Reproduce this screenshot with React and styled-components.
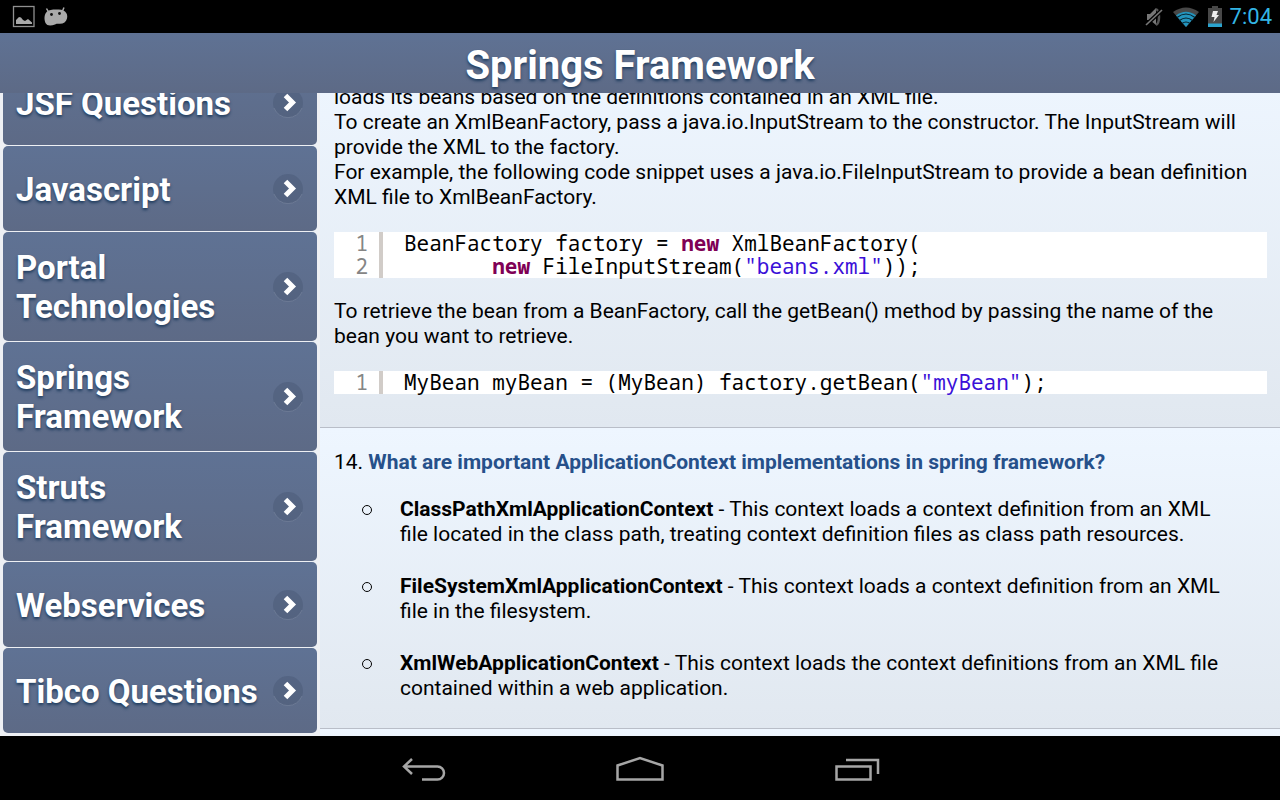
import React from 'react';
import styled, { createGlobalStyle } from 'styled-components';

const GlobalStyle = createGlobalStyle`
  * {
    box-sizing: border-box;
  }
  body {
    margin: 0;
    background: #000;
    font-family: Roboto, 'Liberation Sans', sans-serif;
  }
`;

const Screen = styled.div`
  display: flex;
  flex-direction: column;
  height: 100vh;
  overflow: hidden;
`;

const StatusBar = styled.div`
  display: flex;
  flex: none;
  align-items: center;
  justify-content: space-between;
  height: 33px;
  padding: 0 8px 0 12px;
  background: #000;
`;

const StatusGroup = styled.div`
  display: flex;
  align-items: center;
  gap: 8px;
`;

const Clock = styled.span`
  color: #33b5e5;
  font-size: 22px;
  line-height: 35px;
`;

const Header = styled.header`
  flex: none;
  height: 60px;
  background: linear-gradient(#5f7294, #5d6a86);
`;

const Title = styled.h1`
  margin: 0;
  color: #fff;
  font-size: 40px;
  font-weight: bold;
  line-height: 66px;
  text-align: center;
  text-shadow: 0 2px 3px #1f3c5e;
`;

const Main = styled.div`
  display: flex;
  flex: 1;
  min-height: 0;
  background: #eef0f4;
`;

const Sidebar = styled.nav`
  display: flex;
  flex: none;
  flex-direction: column;
  justify-content: flex-end;
  gap: 1px;
  width: 320px;
  padding: 0 3px 3px;
  overflow: hidden;
`;

const TopicLink = styled.a`
  display: flex;
  flex: none;
  align-items: center;
  justify-content: space-between;
  min-height: 85px;
  padding: 16px 13px 15px;
  border-radius: 5px;
  background: linear-gradient(#5f7294, #5d6a86);
  color: #fff;
  font-size: 33px;
  font-weight: bold;
  line-height: 39px;
  text-decoration: none;
  text-shadow: 0 2px 3px #1f3c5e;

  svg {
    flex: none;
  }
`;

const Content = styled.main`
  flex: 1;
  min-width: 0;
  overflow: hidden;
`;

const Article = styled.article`
  padding: 22px 13px 27px 14px;
  border-bottom: 1px solid #b9bec8;
  background: linear-gradient(#eef6ff, #e1e8f0);
  color: #000;
  font-size: 21px;
  line-height: 25px;

  &:first-child {
    margin-top: -30px;
    padding-bottom: 12px;
  }
`;

const Paragraph = styled.p`
  margin: 0;
  padding-right: 8px;
`;

const Question = styled.h2`
  margin: 0;
  font-size: 21px;
  font-weight: normal;
  line-height: 25px;

  strong {
    color: #26508a;
  }
`;

const Code = styled.table`
  width: 100%;
  margin: 22px 0 21px;
  border-spacing: 0;
  background: #fff;
  font-family: 'Droid Sans Mono', 'Noto Sans Mono', 'DejaVu Sans Mono', monospace;
  font-size: 21px;
  line-height: 23px;

  td {
    padding: 0;
    white-space: pre;
  }
`;

const LineNumber = styled.td`
  width: 49px;
  border-right: 4px solid #d1ccc8;
  color: #858585;

  span {
    display: block;
    width: 34px;
    text-align: right;
  }
`;

const CodeText = styled.code`
  padding-left: 21px;
  font-family: inherit;
`;

const Keyword = styled.b`
  color: #7f0055;
`;

const Str = styled.span`
  color: #3a10d8;
`;

const Contexts = styled.ul`
  display: flex;
  flex-direction: column;
  gap: 27px;
  margin: 22px 0 0;
  padding: 0 28px;
  list-style: none;
`;

const Context = styled.li`
  display: flex;
  gap: 28px;
`;

const Bullet = styled.span`
  flex: none;
  width: 10px;
  height: 10px;
  margin-top: 8px;
  border: 1px solid #000;
  border-radius: 50%;
`;

const NavBar = styled.div`
  display: flex;
  flex: none;
  align-items: center;
  justify-content: center;
  gap: 120px;
  height: 64px;
  padding-top: 4px;
  background: #000;
`;

const NavButton = styled.button`
  display: flex;
  align-items: center;
  justify-content: center;
  width: 96px;
  height: 60px;
  padding: 0;
  border: 0;
  background: none;
`;

const ArrowIcon = () => (
  <svg width="32" height="34" viewBox="0 0 32 34" aria-hidden="true">
    <circle cx="16" cy="17" r="15" fill="#2d3a55" fillOpacity="0.2" />
    <path d="M2 22a15 15 0 0 0 28 0" fill="none" stroke="#8794ae" strokeOpacity="0.45" />
    <path d="M13.500 9.500l7 7-7 7" fill="none" stroke="#fff" strokeWidth="5" />
  </svg>
);

const PictureIcon = () => (
  <svg width="23" height="23" viewBox="0 0 23 23" aria-hidden="true">
    <rect x="1.500" y="1.500" width="20.500" height="20" fill="none" stroke="#909090" strokeWidth="1.300" />
    <path d="M4 19v-4l3-3 2 .5 2 2.500 2 1 3-2 4 3.500V19z" fill="#a9a9a9" />
  </svg>
);

const AndroidIcon = () => (
  <svg width="26" height="20" viewBox="0 0 26 20" aria-hidden="true">
    <path
      d="M4 4.500C6 3 9 2.500 13 2.500s7 .3 9 2c2 1.800 2.700 4 2 7-.8 3.600-3.500 5.300-7 5.300-2 0-3-.3-5 .6-4 1.600-8 1.600-9.500-1.400C1 12 1 7.500 4 4.500z"
      fill="#aaa"
    />
    <path d="M5.500 5L3.500 1.500M19.500 4l1.500-3.500" stroke="#aaa" strokeWidth="1.500" />
    <circle cx="8.500" cy="7.500" r="1.400" fill="#111" />
    <circle cx="16.500" cy="6.500" r="1.400" fill="#111" />
  </svg>
);

const MuteIcon = () => (
  <svg width="20" height="22" viewBox="0 0 20 22" aria-hidden="true">
    <path d="M3 8h3l6-6v17l-6-5H3z" fill="#777" />
    <path d="M12 3c4 2 4 14 0 16" fill="none" stroke="#555" strokeWidth="2.500" />
    <path d="M2 19L18 4" stroke="#000" strokeWidth="4" />
    <path d="M2 19L18 4" stroke="#777" strokeWidth="1.700" />
  </svg>
);

const WifiIcon = () => (
  <svg width="28" height="22" viewBox="0 0 28 22" aria-hidden="true">
    <path d="M1 6Q14-3 27 6L14 21z" fill="#484848" />
    <path d="M4 9.500Q14 2 24 9.500L14 21z" fill="#2494bd" />
    <path d="M5 11.500q9-7 18 0M7.500 14.500q6.500-5 13 0M10 17.500q4-3 8 0" fill="none" stroke="#06202a" strokeWidth="1.200" />
  </svg>
);

const BatteryIcon = () => (
  <svg width="14" height="22" viewBox="0 0 14 22" aria-hidden="true">
    <path d="M4 0h6v2h4v18H0V2h4z" fill="#484848" />
    <path d="M0 17.500h14V21H0z" fill="#2ba3cd" />
    <path d="M5 5h5L8.500 9H11l-5.500 7 1-5H3.500z" fill="#eee" />
  </svg>
);

const BackIcon = () => (
  <svg width="48" height="28" viewBox="0 0 48 28" aria-hidden="true">
    <path d="M4 10.500h33.500a6.500 6.500 0 0 1 0 13H22M12 3L4 10.500 12 18" fill="none" stroke="#a6a6a6" strokeWidth="2.500" />
  </svg>
);

const HomeIcon = () => (
  <svg width="50" height="28" viewBox="0 0 50 28" aria-hidden="true">
    <path d="M2.500 23.500V9.500L25 2l22.500 7.500v14z" fill="none" stroke="#a6a6a6" strokeWidth="2.500" />
  </svg>
);

const RecentsIcon = () => (
  <svg width="48" height="28" viewBox="0 0 48 28" aria-hidden="true">
    <path d="M4.500 10.500h34v13h-34zM14 4h32v14" fill="none" stroke="#a6a6a6" strokeWidth="2.500" />
  </svg>
);

const topics = [
  'JSF Questions',
  'Javascript',
  'Portal Technologies',
  'Springs Framework',
  'Struts Framework',
  'Webservices',
  'Tibco Questions',
];

const contexts = [
  {
    name: 'ClassPathXmlApplicationContext',
    text: 'This context loads a context definition from an XML file located in the class path, treating context definition files as class path resources.',
  },
  {
    name: 'FileSystemXmlApplicationContext',
    text: 'This context loads a context definition from an XML file in the filesystem.',
  },
  {
    name: 'XmlWebApplicationContext',
    text: 'This context loads the context definitions from an XML file contained within a web application.',
  },
];

const CodeBlock = ({ lines }) => (
  <Code>
    <tbody>
      {lines.map((line, i) => (
        <tr key={i}>
          <LineNumber>
            <span>{i + 1}</span>
          </LineNumber>
          <td>
            <CodeText>{line}</CodeText>
          </td>
        </tr>
      ))}
    </tbody>
  </Code>
);

const App = () => {
  return (
    <Screen>
      <GlobalStyle />
      <StatusBar>
        <StatusGroup>
          <PictureIcon />
          <AndroidIcon />
        </StatusGroup>
        <StatusGroup>
          <MuteIcon />
          <WifiIcon />
          <BatteryIcon />
          <Clock>7:04</Clock>
        </StatusGroup>
      </StatusBar>
      <Header>
        <Title>Springs Framework</Title>
      </Header>
      <Main>
        <Sidebar>
          {topics.map((topic) => (
            <TopicLink href="#" key={topic} onClick={(e) => e.preventDefault()}>
              {topic}
              <ArrowIcon />
            </TopicLink>
          ))}
        </Sidebar>
        <Content>
          <Article>
            <Paragraph>
              loads its beans based on the definitions contained in an XML file.
              <br />
              To create an XmlBeanFactory, pass a java.io.InputStream to the constructor. The InputStream will
              provide the XML to the factory.
              <br />
              For example, the following code snippet uses a java.io.FileInputStream to provide a bean definition
              XML file to XmlBeanFactory.
            </Paragraph>
            <CodeBlock
              lines={[
                <>
                  BeanFactory factory = <Keyword>new</Keyword> XmlBeanFactory(
                </>,
                <>
                  {'       '}
                  <Keyword>new</Keyword> FileInputStream(<Str>"beans.xml"</Str>));
                </>,
              ]}
            />
            <Paragraph>
              To retrieve the bean from a BeanFactory, call the getBean() method by passing the name of the
              bean you want to retrieve.
            </Paragraph>
            <CodeBlock
              lines={[
                <>
                  MyBean myBean = (MyBean) factory.getBean(<Str>"myBean"</Str>);
                </>,
              ]}
            />
          </Article>
          <Article>
            <Question>
              14. <strong>What are important ApplicationContext implementations in spring framework?</strong>
            </Question>
            <Contexts>
              {contexts.map(({ name, text }) => (
                <Context key={name}>
                  <Bullet />
                  <span>
                    <b>{name}</b> - {text}
                  </span>
                </Context>
              ))}
            </Contexts>
          </Article>
          <Article />
        </Content>
      </Main>
      <NavBar>
        <NavButton aria-label="Back">
          <BackIcon />
        </NavButton>
        <NavButton aria-label="Home">
          <HomeIcon />
        </NavButton>
        <NavButton aria-label="Recent apps">
          <RecentsIcon />
        </NavButton>
      </NavBar>
    </Screen>
  );
};

export default App;
